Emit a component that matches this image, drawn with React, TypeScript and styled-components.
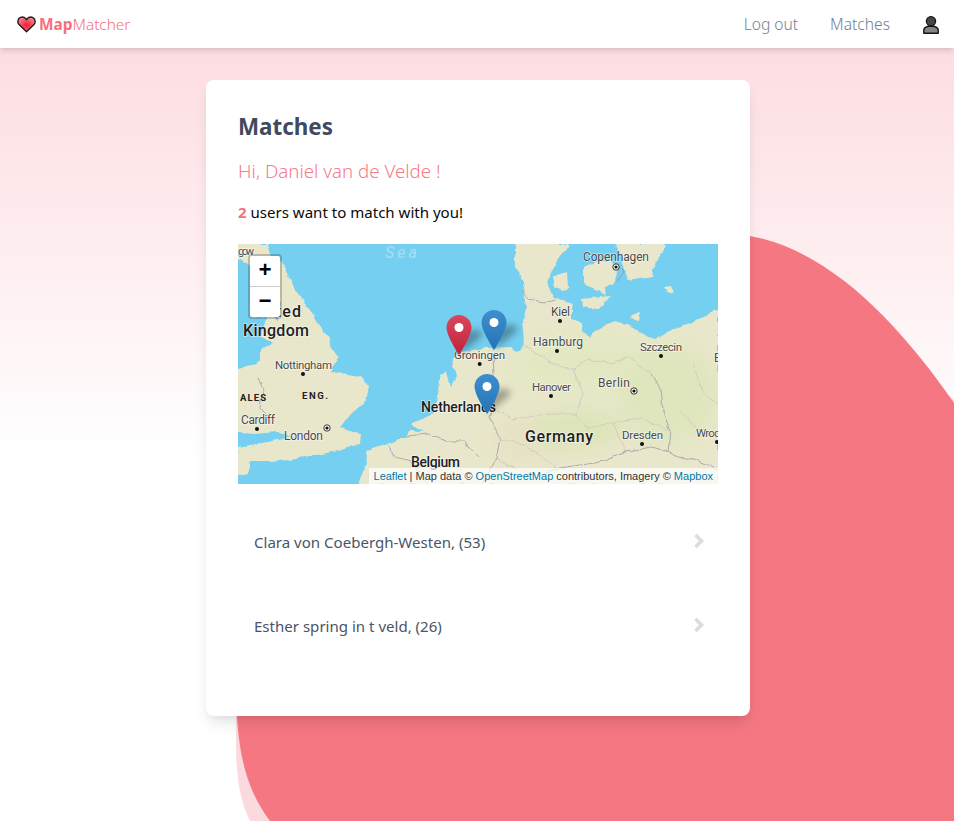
import React from 'react';
import styled, { createGlobalStyle } from 'styled-components';

const UI_FONT = `"Noto Sans", "Open Sans", sans-serif`;

const GlobalStyle = createGlobalStyle`
  html, body {
    margin: 0;
    padding: 0;
    height: 100%;
    background: #fff;
    font-family: ${UI_FONT};
  }
`;

const Page = styled.div`
  position: relative;
  height: 821px;
  overflow: hidden;
  background: linear-gradient(to bottom, #fddde1 0, #fddde1 48px, #fff 460px);
`;

const Blob = styled.svg`
  position: absolute;
  top: 0;
  left: 0;
  width: 954px;
  height: 821px;
`;

const Navbar = styled.nav`
  position: relative;
  display: flex;
  align-items: center;
  justify-content: space-between;
  height: 48px;
  padding: 0 15px 0 17px;
  background: #fff;
  box-shadow: 0 4px 6px -1px rgba(0, 0, 0, 0.1), 0 2px 4px -1px rgba(0, 0, 0, 0.06);
`;

const Brand = styled.div`
  display: flex;
  align-items: center;
  gap: 3px;
  font-size: 15.4px;
  font-weight: 300;
  color: #f6707c;
`;

const BrandBold = styled.span`
  font-weight: 700;
`;

const NavLinks = styled.div`
  display: flex;
  align-items: center;
  gap: 32px;
  svg {
    margin-left: 1px;
  }
`;

const NavLink = styled.a`
  font-size: 15.6px;
  font-weight: 300;
  color: #718096;
`;

const Card = styled.main`
  position: relative;
  box-sizing: border-box;
  width: 544px;
  height: 636px;
  margin: 32px 0 0 206px;
  padding: 32px;
  background: #fff;
  border-radius: 8px;
  box-shadow: 0 10px 15px -3px rgba(0, 0, 0, 0.1), 0 4px 6px -2px rgba(0, 0, 0, 0.05);
`;

const Title = styled.h2`
  margin: 0;
  padding-top: 1px;
  font-size: 22.4px;
  line-height: 28px;
  font-weight: 700;
  color: #3f4a5e;
`;

const Greeting = styled.p`
  margin: 16px 0 0;
  font-size: 18.7px;
  line-height: 28px;
  font-weight: 300;
  color: #f77c89;
`;

const Summary = styled.p`
  margin: 15px 0 0;
  font-size: 15.05px;
  line-height: 24px;
  color: #0a0a0a;
`;

const Count = styled.strong`
  font-weight: 700;
  color: #f6707c;
`;

const MapBox = styled.div`
  position: relative;
  width: 480px;
  height: 240px;
  margin-top: 20px;
  overflow: hidden;
  background: #75cff0;
`;

const MapDrawing = styled.svg`
  display: block;
  width: 480px;
  height: 240px;
`;

const ZoomControl = styled.div`
  position: absolute;
  top: 10px;
  left: 10px;
  border: 2px solid rgba(0, 0, 0, 0.2);
  border-radius: 4px;
  background-clip: padding-box;
`;

const ZoomButton = styled.div<{ $last?: boolean }>`
  display: flex;
  align-items: center;
  justify-content: center;
  width: 30px;
  height: 30px;
  background: #fff;
  color: #000;
  font: 700 22px "Liberation Mono", monospace;
  border-bottom: ${(p) => (p.$last ? 'none' : '1px solid #ccc')};
  border-radius: ${(p) => (p.$last ? '0 0 2px 2px' : '2px 2px 0 0')};
`;

const Attribution = styled.div`
  position: absolute;
  right: 0;
  bottom: 0;
  padding: 0 5px;
  height: 16px;
  line-height: 16px;
  white-space: nowrap;
  background: rgba(255, 255, 255, 0.7);
  font-family: "Liberation Sans", Arial, sans-serif;
  font-size: 11px;
  color: #333;
`;

const AttributionLink = styled.a`
  color: #0078a8;
`;

const MatchList = styled.ul`
  margin: 16px 0 0;
  padding: 0;
  list-style: none;
`;

const MatchRow = styled.li`
  display: flex;
  align-items: center;
  justify-content: space-between;
  height: 84px;
  padding: 0 14px 0 16px;
  font-size: 15.05px;
  color: #4a5568;
  svg {
    margin-top: -3px;
  }
`;

const LAND = '#e9e7cb';
const BORDER = '#a3a3ac';

// coast lines, in map pixels
const landShapes = [
  'M0,0 L30,0 L33,10 L43,17 L52,35 L58,47 L62,52 L66,60 L70,62 L76,72 L80,80 L90,93 L93,103 L100,113 L97,120 L93,127 L103,130 L123,133 L131,143 L128,157 L113,170 L103,183 L123,190 L122,200 L100,207 L67,213 L33,217 L13,217 L10,230 L0,232 L0,203 L30,198 L55,193 L40,188 L15,190 L0,188 L0,125 L12,122 L22,117 L22,105 L35,100 L24,92 L30,70 L40,77 L43,60 L20,25 L0,15 Z',
  'M120,240 L129,220 L128,207 L150,200 L168,192 L173,186 L185,188 L173,180 L195,170 L200,153 L201,133 L208,128 L212,143 L219,132 L214,122 L217,113 L224,108 L246,104 L273,103 L278,108 L282,107 L287,97 L285,75 L289,63 L285,50 L287,37 L277,23 L277,0 L330,0 L330,3 L322,13 L315,23 L312,30 L309,37 L312,47 L317,53 L325,57 L335,60 L334,65 L334,75 L344,78 L344,87 L352,93 L357,87 L375,77 L390,80 L409,93 L417,95 L429,88 L449,80 L475,68 L480,65 L480,240 Z',
  'M378,0 L385,20 L390,36 L415,32 L417,20 L425,7 L428,0 Z',
  'M345,23 L345,40 L362,47 L367,52 L369,43 L377,37 L380,23 L372,17 L362,17 Z',
  'M344,55 L362,53 L372,52 L365,63 L359,65 L345,63 Z',
  'M392,75 L395,70 L402,68 L400,78 Z',
  'M315,32 L329,28 L330,43 L324,48 L317,43 Z',
  'M427,43 L434,42 L437,50 L430,48 Z',
];

const borders = [
  'M20,133 L25,147 L22,163 L30,173',
  'M168,192 L190,190 L207,197 L227,197 L230,203 L240,213',
  'M150,200 L157,213 L173,217 L190,240',
  'M284,48 L290,55 L305,58 L319,55',
  'M255,110 L256,130 L257,150 L252,175 L262,195 L258,215 L245,240',
  'M413,130 L423,145 L425,167 L432,187 L430,207 L412,203 L387,208 L367,217 L350,220 L320,224 L300,232',
  'M430,207 L440,213 L455,215 L480,225',
];

const stateBorders = [
  'M285,100 L310,118 L335,125 L350,115 L375,120 L390,112 L413,130',
  'M335,125 L345,150 L338,170 L350,185 L375,178 L387,208',
  'M258,165 L275,175 L310,170 L338,170',
  'M262,195 L285,200 L300,210 L320,224',
  'M375,178 L405,175 L432,187',
  'M258,215 L272,222 L300,232',
  'M455,120 L465,150 L480,160',
  'M440,165 L460,185 L480,190',
];

type MapLabel = { text: string; x: number; y: number; width: number; size: number; weight?: number };

const labels: MapLabel[] = [
  { text: 'gow', x: 0, y: 11, width: 16, size: 11 },
  { text: 'United', x: 11, y: 73, width: 52, size: 16, weight: 500 },
  { text: 'Kingdom', x: 5, y: 92, width: 66, size: 16, weight: 500 },
  { text: 'Nottingham', x: 37, y: 125, width: 57, size: 11.5 },
  { text: 'Cardiff', x: 3, y: 180, width: 34, size: 12 },
  { text: 'London', x: 46, y: 196, width: 39, size: 12 },
  { text: 'Groningen', x: 216, y: 115, width: 51, size: 11.5 },
  { text: 'Netherlands', x: 183, y: 168, width: 75, size: 14, weight: 500 },
  { text: 'Belgium', x: 173, y: 223, width: 49, size: 14, weight: 500 },
  { text: 'Copenhagen', x: 345, y: 17, width: 66, size: 12 },
  { text: 'Kiel', x: 313, y: 72, width: 19, size: 12 },
  { text: 'Hamburg', x: 295, y: 102, width: 50, size: 12 },
  { text: 'Szczecin', x: 402, y: 107, width: 42, size: 11.5 },
  { text: 'Hanover', x: 294, y: 147, width: 39, size: 11.5 },
  { text: 'Berlin', x: 360, y: 143, width: 32, size: 12 },
  { text: 'Germany', x: 287, y: 198, width: 68, size: 16, weight: 500 },
  { text: 'Dresden', x: 384, y: 195, width: 41, size: 11.5 },
  { text: 'Wroc', x: 458, y: 193, width: 24, size: 11.5 },
  { text: 'B', x: 476, y: 118, width: 8, size: 12 },
];

const regionLabels: MapLabel[] = [
  { text: 'ALES', x: 2, y: 157, width: 26, size: 9.5, weight: 700 },
  { text: 'ENG.', x: 64, y: 155, width: 26, size: 9.5, weight: 700 },
];

const cities = [
  [65, 130], [19, 185], [241.7, 120], [322, 77], [319, 107], [423, 112], [313, 152], [404, 200], [479, 198],
];

const capitals = [
  [89, 184], [378, 23], [396, 147],
];

const Pin = ({ tipX, tipY, fill }: { tipX: number; tipY: number; fill: string }) => (
  <g transform={`translate(${tipX - 12.5} ${tipY - 40})`}>
    <path
      d="M12.5 0C5.6 0 0 5.6 0 12.5C0 21 12.5 40 12.5 40C12.5 40 25 21 25 12.5C25 5.6 19.4 0 12.5 0Z"
      fill={`url(#${fill})`}
    />
    <circle cx="12.5" cy="12.5" r="4.5" fill="#fff" />
  </g>
);

const PinShadow = ({ tipX, tipY }: { tipX: number; tipY: number }) => (
  <path
    d={`M${tipX} ${tipY} L${tipX + 22} ${tipY - 18} C${tipX + 28} ${tipY - 26} ${tipX + 12} ${tipY - 28} ${tipX + 4} ${tipY - 20} Z`}
    fill="rgba(0,0,0,0.32)"
    filter="url(#pinBlur)"
  />
);

const MapArt = () => (
  <MapDrawing viewBox="0 0 480 240">
    <defs>
      <linearGradient id="redPin" x1="0" y1="0" x2="0" y2="1">
        <stop offset="0" stopColor="#d8485c" />
        <stop offset="1" stopColor="#c0213a" />
      </linearGradient>
      <linearGradient id="bluePin" x1="0" y1="0" x2="0" y2="1">
        <stop offset="0" stopColor="#3f8fd0" />
        <stop offset="1" stopColor="#2374b4" />
      </linearGradient>
      <filter id="pinBlur" x="-50%" y="-50%" width="200%" height="200%">
        <feGaussianBlur stdDeviation="3.5" />
      </filter>
      <filter id="terrainBlur" x="-50%" y="-50%" width="200%" height="200%">
        <feGaussianBlur stdDeviation="10" />
      </filter>
      {/* roughens the straight coast segments */}
      <filter id="coast" x="-5%" y="-5%" width="110%" height="110%">
        <feTurbulence type="fractalNoise" baseFrequency="0.1" numOctaves="3" seed="4" result="noise" />
        <feDisplacementMap in="SourceGraphic" in2="noise" scale="5" xChannelSelector="R" yChannelSelector="G" />
      </filter>
      <clipPath id="landClip">
        {landShapes.map((d) => (
          <path key={d} d={d} />
        ))}
      </clipPath>
    </defs>
    <g filter="url(#coast)">
      {landShapes.map((d) => (
        <path key={d} d={d} fill={LAND} />
      ))}
    </g>
    <g clipPath="url(#landClip)" filter="url(#terrainBlur)">
      <ellipse cx="340" cy="120" rx="70" ry="30" fill="#e3e8c2" />
      <ellipse cx="290" cy="195" rx="40" ry="25" fill="#e6e2c4" />
      <ellipse cx="430" cy="150" rx="50" ry="50" fill="#dfe6bd" />
      <ellipse cx="340" cy="185" rx="45" ry="20" fill="#dce4b8" />
    </g>
    <g filter="url(#coast)">
      {stateBorders.map((d) => (
        <path key={d} d={d} fill="none" stroke="#c9c9c0" strokeWidth="0.8" />
      ))}
      {borders.map((d) => (
        <path key={d} d={d} fill="none" stroke={BORDER} strokeWidth="0.9" />
      ))}
    </g>
    <path d="M384 24 L386 28 L379 37" fill="none" stroke="#9a9aa6" strokeWidth="1" />
    <text x="147" y="14" fontFamily="Roboto, sans-serif" fontSize="16" fontStyle="italic" letterSpacing="3" fill="#a9def3">
      Sea
    </text>
    {labels.map((l) => (
      <text
        key={l.text}
        x={l.x}
        y={l.y}
        textLength={l.width}
        fontFamily="Roboto, sans-serif"
        fontSize={l.size}
        fontWeight={l.weight ?? 400}
        fill={l.weight ? '#1d1d1f' : '#4a4a4e'}
        stroke="rgba(255,255,255,0.55)"
        strokeWidth="1.6"
        paintOrder="stroke"
      >
        {l.text}
      </text>
    ))}
    {regionLabels.map((l) => (
      <text key={l.text} x={l.x} y={l.y} textLength={l.width} fontFamily="Roboto, sans-serif" fontSize={l.size} fontWeight={l.weight} fill="#222">
        {l.text}
      </text>
    ))}
    {cities.map(([x, y]) => (
      <circle key={`${x}-${y}`} cx={x} cy={y} r="2" fill="#111" />
    ))}
    {capitals.map(([x, y]) => (
      <g key={`${x}-${y}`}>
        <circle cx={x} cy={y} r="3.2" fill="#fff" stroke="#222" strokeWidth="0.9" />
        <circle cx={x} cy={y} r="1.6" fill="#111" />
      </g>
    ))}
    <PinShadow tipX={221} tipY={111} />
    <PinShadow tipX={256} tipY={106} />
    <PinShadow tipX={249} tipY={170} />
    <Pin tipX={221} tipY={111} fill="redPin" />
    <Pin tipX={256} tipY={106} fill="bluePin" />
    <Pin tipX={249} tipY={170} fill="bluePin" />
  </MapDrawing>
);

const HeartIcon = () => (
  <svg width="19" height="17" viewBox="0 0 19 17">
    <defs>
      <radialGradient id="heartFill" cx="0.5" cy="0.55" r="0.55">
        <stop offset="0" stopColor="#ee1c35" />
        <stop offset="1" stopColor="#f6808b" />
      </radialGradient>
    </defs>
    <path
      d="M9.5 15.8 L2 8.6 C0 6.4 .8 2.4 3.6 1.4 C6 .6 8.2 1.6 9.5 3.6 C10.8 1.6 13 .6 15.4 1.4 C18.2 2.4 19 6.4 17 8.6 Z"
      fill="url(#heartFill)"
      stroke="#1c1c1c"
      strokeWidth="1.4"
      strokeLinejoin="round"
    />
  </svg>
);

const UserIcon = () => (
  <svg width="16" height="19" viewBox="0 0 16 19">
    <path d="M.8 18.2 L.8 15 C.8 12.6 4 11.6 5.5 11.2 L10.5 11.2 C12 11.6 15.2 12.6 15.2 15 L15.2 18.2 Z" fill="#858585" stroke="#151515" strokeWidth="1.4" strokeLinejoin="round" />
    <circle cx="8" cy="6.2" r="4.6" fill="#454545" stroke="#151515" strokeWidth="1.3" />
  </svg>
);

const ChevronIcon = () => (
  <svg width="11" height="16" viewBox="0 0 11 16">
    <path d="M2.5 2 L8.5 8 L2.5 14" fill="none" stroke="#dcdcdc" strokeWidth="3.6" strokeLinejoin="miter" />
  </svg>
);

const matches = ['Clara von Coebergh-Westen, (53)', 'Esther spring in t veld, (26)'];

const App = () => (
  <Page>
    <GlobalStyle />
    <Blob viewBox="0 0 954 821">
      <path d="M236 600 L236 740 C236 780 240 800 250 821 L954 821 L954 400 L750 236 Z" fill="#fbdadf" />
      <path d="M237 716 C240 770 253 798 270 821 L954 821 L954 403 C900 325 830 250 750 236 L300 236 Z" fill="#f57782" />
    </Blob>
    <Navbar>
      <Brand>
        <HeartIcon />
        <span>
          <BrandBold>Map</BrandBold>Matcher
        </span>
      </Brand>
      <NavLinks>
        <NavLink>Log out</NavLink>
        <NavLink>Matches</NavLink>
        <UserIcon />
      </NavLinks>
    </Navbar>
    <Card>
      <Title>Matches</Title>
      <Greeting>Hi, Daniel van de Velde !</Greeting>
      <Summary>
        <Count>2</Count> users want to match with you!
      </Summary>
      <MapBox>
        <MapArt />
        <ZoomControl>
          <ZoomButton>+</ZoomButton>
          <ZoomButton $last>−</ZoomButton>
        </ZoomControl>
        <Attribution>
          <AttributionLink>Leaflet</AttributionLink> | Map data © <AttributionLink>OpenStreetMap</AttributionLink> contributors, Imagery © <AttributionLink>Mapbox</AttributionLink>
        </Attribution>
      </MapBox>
      <MatchList>
        {matches.map((name) => (
          <MatchRow key={name}>
            {name}
            <ChevronIcon />
          </MatchRow>
        ))}
      </MatchList>
    </Card>
  </Page>
);

export default App;
